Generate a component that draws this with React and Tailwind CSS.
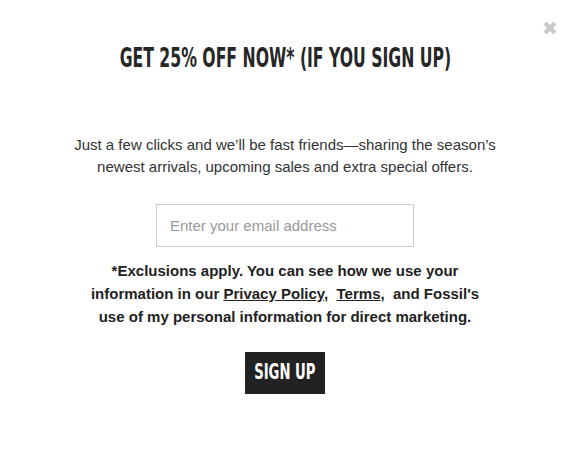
import React, { useState } from "react";

function SignupModal() {
    const [email, setEmail] = useState("");

    return (
        <div className="relative w-[570px] h-[450px] bg-white font-['Liberation_Sans',Arial,sans-serif] text-[#222]">
            {/* Close */}
            <button className="absolute top-[20px] right-[12px] w-[16px] h-[16px] flex items-center justify-center">
                <svg width="16" height="16" viewBox="0 0 16 16">
                    <path d="M3 3 L13 13 M13 3 L3 13" stroke="#c8c8c8" strokeWidth="4" strokeLinecap="butt" />
                </svg>
            </button>

            <div className="flex flex-col items-center pt-[43px]">
                <h1 className="font-['DejaVu_Sans_Condensed',sans-serif] font-bold text-[26px] leading-[30px] tracking-[0px] text-[#262626] whitespace-nowrap scale-x-[0.67]">
                    GET 25% OFF NOW* (IF YOU SIGN UP)
                </h1>

                <p className="mt-[61px] text-center text-[15px] leading-[22px] text-[#333]">
                    Just a few clicks and we’ll be fast friends—sharing the season’s
                    <br />
                    newest arrivals, upcoming sales and extra special offers.
                </p>

                <input
                    type="email"
                    placeholder="Enter your email address"
                    value={email}
                    onChange={(e) => setEmail(e.target.value)}
                    className="mt-[26px] w-[258px] h-[43px] px-[13px] border border-[#ccc] text-[15px] placeholder:text-[#999] focus:outline-none"
                />

                <p className="mt-[12px] text-center font-bold text-[15px] leading-[23px] text-[#222]">
                    *Exclusions apply. You can see how we use your
                    <br />
                    information in our <a className="underline">Privacy Policy</a>,&nbsp; <a className="underline">Terms</a>,&nbsp; and Fossil's
                    <br />
                    use of my personal information for direct marketing.
                </p>

                <button className="mt-[24px] w-[80px] h-[42px] bg-[#222] text-white flex items-center justify-center">
                    <span className="font-['DejaVu_Sans_Condensed',sans-serif] font-bold text-[21px] whitespace-nowrap scale-x-[0.7]">
                        SIGN UP
                    </span>
                </button>
            </div>
        </div>
    );
}

export default function App() {
    return <SignupModal />;
}
